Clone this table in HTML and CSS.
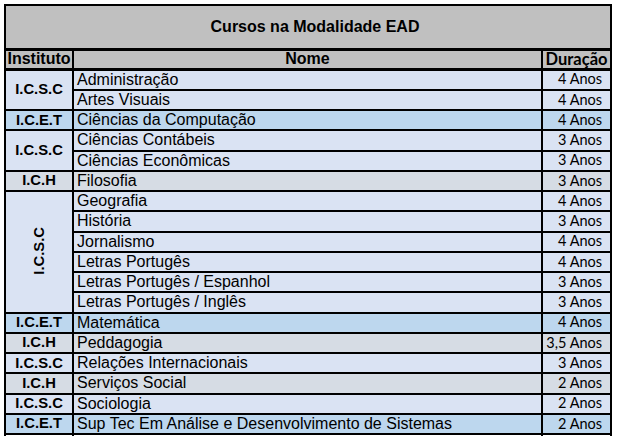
FILE: index.html
```html
<!DOCTYPE html>
<html lang="pt">
<head>
<meta charset="utf-8">
<title>Cursos na Modalidade EAD</title>
<link rel="stylesheet" href="styles.css">
</head>
<body>
<div class="sheet">
<table class="cursos">
  <colgroup>
    <col class="c-inst">
    <col class="c-nome">
    <col class="c-dur">
  </colgroup>
  <thead>
    <tr class="title"><th colspan="3">Cursos na Modalidade EAD</th></tr>
    <tr class="head">
      <th class="h-inst">Instituto</th>
      <th class="h-nome">Nome</th>
      <th class="h-dur">Duração</th>
    </tr>
  </thead>
  <tbody>
    <tr class="d icsc"><td class="inst" rowspan="2">I.C.S.C</td><td class="nome">Administração</td><td class="dur">4 Anos</td></tr>
    <tr class="d icsc"><td class="nome">Artes Visuais</td><td class="dur">4 Anos</td></tr>
    <tr class="d icet"><td class="inst">I.C.E.T</td><td class="nome">Ciências da Computação</td><td class="dur">4 Anos</td></tr>
    <tr class="d icsc"><td class="inst" rowspan="2">I.C.S.C</td><td class="nome">Ciências Contábeis</td><td class="dur">3 Anos</td></tr>
    <tr class="d icsc"><td class="nome">Ciências Econômicas</td><td class="dur">3 Anos</td></tr>
    <tr class="d ich"><td class="inst">I.C.H</td><td class="nome">Filosofia</td><td class="dur">3 Anos</td></tr>
    <tr class="d icsc"><td class="inst" rowspan="6"><span class="vert">I.C.S.C</span></td><td class="nome">Geografia</td><td class="dur">4 Anos</td></tr>
    <tr class="d icsc"><td class="nome">História</td><td class="dur">3 Anos</td></tr>
    <tr class="d icsc"><td class="nome">Jornalismo</td><td class="dur">4 Anos</td></tr>
    <tr class="d icsc"><td class="nome">Letras Portugês</td><td class="dur">4 Anos</td></tr>
    <tr class="d icsc"><td class="nome">Letras Portugês / Espanhol</td><td class="dur">3 Anos</td></tr>
    <tr class="d icsc"><td class="nome">Letras Portugês / Inglês</td><td class="dur">3 Anos</td></tr>
    <tr class="d icet"><td class="inst">I.C.E.T</td><td class="nome">Matemática</td><td class="dur">4 Anos</td></tr>
    <tr class="d ich"><td class="inst">I.C.H</td><td class="nome">Peddagogia</td><td class="dur">3,5 Anos</td></tr>
    <tr class="d icsc"><td class="inst">I.C.S.C</td><td class="nome">Relações Internacionais</td><td class="dur">3 Anos</td></tr>
    <tr class="d ich"><td class="inst">I.C.H</td><td class="nome">Serviços Social</td><td class="dur">2 Anos</td></tr>
    <tr class="d icsc"><td class="inst">I.C.S.C</td><td class="nome">Sociologia</td><td class="dur">2 Anos</td></tr>
    <tr class="d icet"><td class="inst">I.C.E.T</td><td class="nome">Sup Tec Em Análise e Desenvolvimento de Sistemas</td><td class="dur">2 Anos</td></tr>
    <tr class="blank"><td></td><td></td><td></td></tr>
  </tbody>
</table>
</div>
</body>
</html>
```
FILE: styles.css
```css
html, body {
  margin: 0;
  padding: 0;
  background: #ffffff;
  overflow: hidden;
  height: 436px;
}

.sheet {
  padding: 4px 0 0 4px;
}

.cursos {
  border-collapse: collapse;
  table-layout: fixed;
  width: 608px;
  font-family: "Liberation Sans", Arial, sans-serif;
  color: #000;
}

.c-inst { width: 68px; }
.c-nome { width: 469px; }
.c-dur  { width: 69px; }

.cursos th,
.cursos td {
  border: 2px solid #000;
  padding: 0;
  white-space: nowrap;
  overflow: hidden;
  line-height: 1;
}

.title th {
  background: #c0c0c0;
  height: 42px;
  font-size: 16px;
  font-weight: bold;
  text-align: center;
  padding-left: 14px;
  border-bottom-width: 3px;
}

.head th {
  background: #c0c0c0;
  height: 16.5px;
  font-weight: bold;
  border-bottom-width: 3px;
}

.h-inst {
  font-size: 16px;
  text-align: center;
}

.h-nome {
  font-size: 16px;
  text-align: center;
  padding-left: 12px;
}

.h-dur {
  font-family: Lato, "Liberation Sans", sans-serif;
  font-size: 16.5px;
  text-align: center;
}

.d td {
  height: 18.25px;
}

.icsc td { background: #dae3f3; }
.icet td { background: #bdd7ee; }
.ich td  { background: #d6dce4; }

.inst {
  font-size: 14.8px;
  font-weight: bold;
  text-align: center;
}

.vert {
  display: inline-block;
  writing-mode: vertical-rl;
  transform: rotate(180deg);
}

.nome {
  font-size: 16px;
  text-align: left;
  padding-left: 3px !important;
}

.dur {
  font-family: Lato, "Liberation Sans", sans-serif;
  font-size: 14.5px;
  text-align: right;
  padding-right: 8px !important;
}

.blank td {
  height: 20px;
  background: #ffffff;
  border-bottom: none;
}
```
